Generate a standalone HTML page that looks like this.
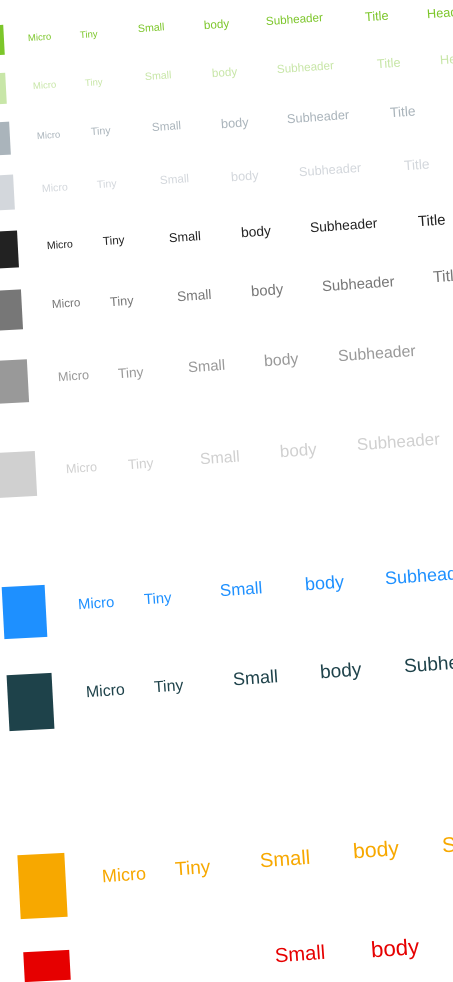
<!DOCTYPE html><html><head><style>
body{margin:0;width:453px;height:961px;overflow:hidden;background:#fff;position:relative;font-family:"Liberation Sans","DejaVu Sans",sans-serif}
#w{position:absolute;left:0;top:3px;width:453px;height:961px}
span{position:absolute;white-space:nowrap;transform:rotate(-4deg) scale(1.06);transform-origin:left center;line-height:1}
i{position:absolute;display:block;transform:rotate(-3deg)}
</style></head><body><div id="w">
<i style="left:-4px;top:22px;width:8px;height:30px;background:#7cc62a"></i>
<span style="left:28px;top:31px;font-size:9px;color:#7cc62a">Micro</span>
<span style="left:80px;top:28px;font-size:9px;color:#7cc62a">Tiny</span>
<span style="left:138px;top:22px;font-size:10px;color:#7cc62a">Small</span>
<span style="left:204px;top:18px;font-size:11px;color:#7cc62a">body</span>
<span style="left:266px;top:14px;font-size:11px;color:#7cc62a">Subheader</span>
<span style="left:365px;top:8px;font-size:12px;color:#7cc62a">Title</span>
<span style="left:427px;top:5px;font-size:12px;color:#7cc62a">Heading</span>

<i style="left:-4px;top:70px;width:10px;height:31px;background:#c8e6a8"></i>
<span style="left:33px;top:79px;font-size:9px;color:#c8e6a8">Micro</span>
<span style="left:85px;top:76px;font-size:9px;color:#c8e6a8">Tiny</span>
<span style="left:145px;top:70px;font-size:10px;color:#c8e6a8">Small</span>
<span style="left:212px;top:66px;font-size:11px;color:#c8e6a8">body</span>
<span style="left:277px;top:62px;font-size:11px;color:#c8e6a8">Subheader</span>
<span style="left:377px;top:55px;font-size:12px;color:#c8e6a8">Title</span>
<span style="left:440px;top:51px;font-size:12px;color:#c8e6a8">Heading</span>

<i style="left:-4px;top:119px;width:14px;height:33px;background:#aab4bb"></i>
<span style="left:37px;top:129px;font-size:9px;color:#aab4bb">Micro</span>
<span style="left:91px;top:125px;font-size:10px;color:#aab4bb">Tiny</span>
<span style="left:152px;top:120px;font-size:11px;color:#aab4bb">Small</span>
<span style="left:221px;top:115px;font-size:12px;color:#aab4bb">body</span>
<span style="left:287px;top:110px;font-size:12px;color:#aab4bb">Subheader</span>
<span style="left:390px;top:103px;font-size:13px;color:#aab4bb">Title</span>

<i style="left:-4px;top:172px;width:18px;height:35px;background:#d3d7dc"></i>
<span style="left:42px;top:182px;font-size:10px;color:#d3d7dc">Micro</span>
<span style="left:97px;top:178px;font-size:10px;color:#d3d7dc">Tiny</span>
<span style="left:160px;top:173px;font-size:11px;color:#d3d7dc">Small</span>
<span style="left:231px;top:168px;font-size:12px;color:#d3d7dc">body</span>
<span style="left:299px;top:163px;font-size:12px;color:#d3d7dc">Subheader</span>
<span style="left:404px;top:156px;font-size:13px;color:#d3d7dc">Title</span>

<i style="left:-4px;top:228px;width:22px;height:37px;background:#222"></i>
<span style="left:47px;top:239px;font-size:10px;color:#222">Micro</span>
<span style="left:103px;top:234px;font-size:11px;color:#222">Tiny</span>
<span style="left:169px;top:229px;font-size:12px;color:#222">Small</span>
<span style="left:241px;top:223px;font-size:13px;color:#222">body</span>
<span style="left:310px;top:218px;font-size:13px;color:#222">Subheader</span>
<span style="left:418px;top:211px;font-size:14px;color:#222">Title</span>

<i style="left:-4px;top:287px;width:26px;height:40px;background:#777"></i>
<span style="left:52px;top:297px;font-size:11px;color:#777">Micro</span>
<span style="left:110px;top:293px;font-size:12px;color:#777">Tiny</span>
<span style="left:177px;top:287px;font-size:13px;color:#777">Small</span>
<span style="left:251px;top:281px;font-size:14px;color:#777">body</span>
<span style="left:322px;top:276px;font-size:14px;color:#777">Subheader</span>
<span style="left:433px;top:267px;font-size:15px;color:#777">Title</span>

<i style="left:-4px;top:357px;width:32px;height:43px;background:#999"></i>
<span style="left:58px;top:368px;font-size:12px;color:#999">Micro</span>
<span style="left:118px;top:364px;font-size:13px;color:#999">Tiny</span>
<span style="left:188px;top:357px;font-size:14px;color:#999">Small</span>
<span style="left:264px;top:351px;font-size:15px;color:#999">body</span>
<span style="left:338px;top:346px;font-size:15px;color:#999">Subheader</span>

<i style="left:-4px;top:449px;width:40px;height:45px;background:#d0d0d0"></i>
<span style="left:66px;top:460px;font-size:12px;color:#d0d0d0">Micro</span>
<span style="left:128px;top:455px;font-size:13px;color:#d0d0d0">Tiny</span>
<span style="left:200px;top:449px;font-size:15px;color:#d0d0d0">Small</span>
<span style="left:280px;top:442px;font-size:16px;color:#d0d0d0">body</span>
<span style="left:357px;top:435px;font-size:16px;color:#d0d0d0">Subheader</span>

<i style="left:3px;top:583px;width:43px;height:52px;background:#1e90ff"></i>
<span style="left:78px;top:594px;font-size:14px;color:#1e90ff">Micro</span>
<span style="left:144px;top:589px;font-size:14px;color:#1e90ff">Tiny</span>
<span style="left:220px;top:581px;font-size:16px;color:#1e90ff">Small</span>
<span style="left:305px;top:573px;font-size:17px;color:#1e90ff">body</span>
<span style="left:385px;top:567px;font-size:17px;color:#1e90ff">Subheader</span>

<i style="left:8px;top:671px;width:45px;height:56px;background:#1e424a"></i>
<span style="left:86px;top:682px;font-size:15px;color:#1e424a">Micro</span>
<span style="left:154px;top:677px;font-size:15px;color:#1e424a">Tiny</span>
<span style="left:233px;top:668px;font-size:17px;color:#1e424a">Small</span>
<span style="left:320px;top:660px;font-size:18px;color:#1e424a">body</span>
<span style="left:404px;top:654px;font-size:18px;color:#1e424a">Subheader</span>

<i style="left:19px;top:851px;width:47px;height:64px;background:#f7a800"></i>
<span style="left:102px;top:865px;font-size:17px;color:#f7a800">Micro</span>
<span style="left:175px;top:857px;font-size:18px;color:#f7a800">Tiny</span>
<span style="left:260px;top:849px;font-size:19px;color:#f7a800">Small</span>
<span style="left:353px;top:839px;font-size:20px;color:#f7a800">body</span>
<span style="left:442px;top:833px;font-size:20px;color:#f7a800">Subheader</span>

<i style="left:24px;top:948px;width:46px;height:30px;background:#e60000"></i>
<span style="left:275px;top:944px;font-size:19px;color:#e60000">Small</span>
<span style="left:371px;top:937px;font-size:21px;color:#e60000">body</span>
</div></body></html>
